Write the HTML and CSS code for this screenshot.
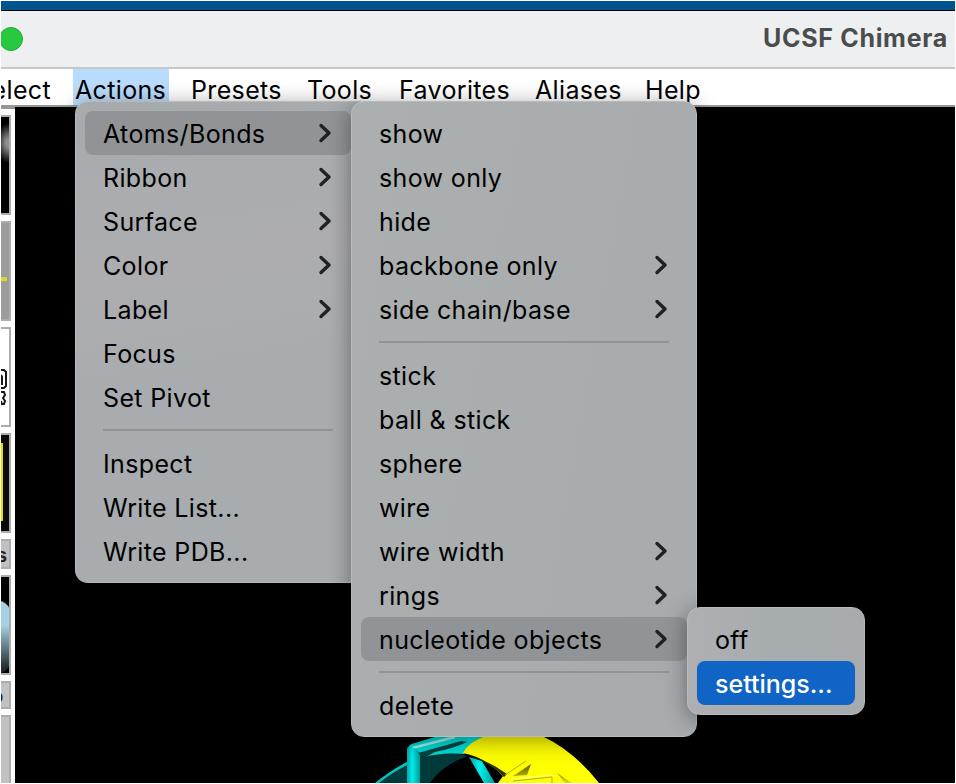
FILE: index.html
```html
<!DOCTYPE html>
<html lang="en">
<head>
<meta charset="utf-8">
<title>UCSF Chimera</title>
<link rel="stylesheet" href="styles.css">
</head>
<body>
<div class="screen">
  <div class="desktop"></div>
  <header class="titlebar"><span class="zoom-button"></span><h1>UCSF Chimera</h1></header>
  <nav class="menubar">
    <span class="m-select">Select</span><span class="m-actions">Actions</span><span class="m-presets">Presets</span><span class="m-tools">Tools</span><span class="m-favorites">Favorites</span><span class="m-aliases">Aliases</span><span class="m-help">Help</span>
  </nav>
  <main class="viewport">
    <aside class="sidebar">
      <div class="thumb t-smoke"></div>
      <div class="thumb t-grey"><i></i></div>
      <div class="thumb t-white"><svg width="8" height="96" viewBox="0 0 8 96"><g fill="none" stroke="#181818" stroke-width="2"><path d="M0 41h3l2 2v14l-2 2H0M0 46l1 2v8M0 63h3l1 3-2 3 2 3-1 3H1M0 72l1 4"/></g></svg></div>
      <div class="thumb t-yellow"></div>
      <div class="thumb label"><b>s</b></div>
      <div class="thumb t-sphere"></div>
      <div class="thumb label short"><b>o</b></div>
      <div class="thumb label tall"></div>
    </aside>
    <svg class="molecule" width="240" height="47" viewBox="370 736 240 47">
      <defs>
        <linearGradient id="tube" x1="0" x2="1" y1="0" y2="0"><stop offset="0" stop-color="#00a8a8"/><stop offset=".4" stop-color="#00f0ec"/><stop offset="1" stop-color="#009a9a"/></linearGradient>
        <linearGradient id="fold" x1="0" x2="0" y1="0" y2="1"><stop offset="0" stop-color="#5a5a00"/><stop offset="1" stop-color="#dede00"/></linearGradient>
      </defs>
      <path fill="#003b3b" d="M375 783Q392 769 408 761L420 754Q448 751 468 756Q442 765 430 783Z"/>
      <path fill="#00c4c4" d="M375 783Q390 771 407 762V765Q390 774 379 783Z"/>
      <path fill="#00dcd8" d="M408 748Q409 744 415 743L438 736H486L464 754Q442 752 424 757L416 750Z"/>
      <path fill="#004444" d="M418 753L461 741L467 742Q452 749 435 752L424 758Z"/>
      <path stroke="#9df5f0" stroke-width="2.5" d="M412 748L455 737"/>
      <path fill="url(#tube)" d="M407 783V748Q414 744 420 755V783Z"/>
      <path fill="url(#tube)" d="M469 757L482 761L495 783H484Z"/>
      <path fill="#ffff00" d="M486 736H542Q574 751 599 783H498L503 776Q485 757 463 753Q468 742 486 736Z"/>
      <path fill="#343400" d="M467 755Q488 760 507 774L504 777Q491 763 467 755Z"/>
      <path fill="url(#fold)" d="M513 776L531 764L527 775ZM557 773L572 783H565Z"/>
      <path stroke="#b0b000" fill="none" d="M505 775L526 761M513 781L552 777V783"/>
      <path stroke="#ffffb0" fill="none" d="M511 779L552 775"/>
    </svg>
  </main>

  <section class="menu menu-actions">
    <div class="item active"><span>Atoms/Bonds</span><svg class="chev"><use href="#c"/></svg></div>
    <div class="item"><span>Ribbon</span><svg class="chev"><use href="#c"/></svg></div>
    <div class="item"><span>Surface</span><svg class="chev"><use href="#c"/></svg></div>
    <div class="item"><span>Color</span><svg class="chev"><use href="#c"/></svg></div>
    <div class="item"><span>Label</span><svg class="chev"><use href="#c"/></svg></div>
    <div class="item"><span>Focus</span></div>
    <div class="item"><span>Set Pivot</span></div>
    <hr>
    <div class="item"><span>Inspect</span></div>
    <div class="item"><span>Write List...</span></div>
    <div class="item"><span>Write PDB...</span></div>
  </section>
  <section class="menu menu-atoms">
    <div class="item"><span>show</span></div>
    <div class="item"><span>show only</span></div>
    <div class="item"><span>hide</span></div>
    <div class="item"><span>backbone only</span><svg class="chev"><use href="#c"/></svg></div>
    <div class="item"><span>side chain/base</span><svg class="chev"><use href="#c"/></svg></div>
    <hr>
    <div class="item"><span>stick</span></div>
    <div class="item"><span>ball &amp; stick</span></div>
    <div class="item"><span>sphere</span></div>
    <div class="item"><span>wire</span></div>
    <div class="item"><span>wire width</span><svg class="chev"><use href="#c"/></svg></div>
    <div class="item"><span>rings</span><svg class="chev"><use href="#c"/></svg></div>
    <div class="item active"><span>nucleotide objects</span><svg class="chev"><use href="#c"/></svg></div>
    <hr>
    <div class="item"><span>delete</span></div>
  </section>
  <section class="menu menu-nucleotide">
    <div class="item"><span>off</span></div>
    <div class="item selected"><span>settings...</span></div>
  </section>
  <svg class="defs"><symbol id="c" viewBox="0 0 14 20"><path d="M3 2.5L11 10L3 17.5" fill="none" stroke="#202124" stroke-width="3.4" stroke-linecap="round" stroke-linejoin="round"/></symbol></svg>
</div>
</body>
</html>
```
FILE: styles.css
```css
* { box-sizing: border-box; }
body { margin: 0; background: #fff; font-family: Inter, "Liberation Sans", sans-serif; font-size: 25px; color: #000; }
.screen { position: relative; width: 956px; height: 784px; padding: 1px; overflow: hidden; display: flex; flex-direction: column; }
.desktop { flex: none; height: 10px; background: #00538d; border-bottom: 1px solid #000; }
.titlebar { flex: none; height: 58px; background: #eeeff1; border-bottom: 2px solid #c7c8ca; display: flex; align-items: center; justify-content: space-between; padding-right: 7px; overflow: hidden; }
.zoom-button { width: 24px; height: 24px; margin-left: -2px; border-radius: 50%; background: #28c840; border: 1px solid #1fae32; }
h1 { margin: 0; padding-bottom: 2px; font-size: 25px; font-weight: 700; letter-spacing: .7px; color: #4b4c4c; white-space: nowrap; }
.menubar { flex: none; height: 38px; background: #fff; border-bottom: 2px solid #979797; display: flex; overflow: hidden; line-height: 43px; letter-spacing: .35px; white-space: nowrap; }
.m-select { width: 72px; display: flex; justify-content: flex-end; padding-right: 22px; }
.m-actions { width: 96px; background: #b9dbfc; padding-left: 2px; }
.m-presets { width: 138px; padding-left: 22px; }
.m-tools { width: 92px; }
.m-favorites { width: 136px; }
.m-aliases { width: 110px; }
.viewport { position: relative; flex: 1; background: #000; min-height: 0; overflow: hidden; }
.sidebar { width: 14px; height: 100%; background: #fff; border-top: 2px solid #979797; padding-top: 6px; display: flex; flex-direction: column; gap: 6px; }
.thumb { flex: none; width: 10px; height: 100px; border: 2px solid #adadad; border-left: 0; overflow: hidden; }
.t-smoke { background: radial-gradient(ellipse 12px 20px at 7px 26px, #8c8c8c 20%, #0000 100%), #000; }
.t-grey { background: #9c9c9c; padding-top: 54px; }
.t-grey i { display: block; width: 6px; height: 4px; background: #d8d82a; }
.t-white svg { display: block; }
.t-yellow { background: linear-gradient(#e0e000, #e0e000) 0 8px / 2px 78px no-repeat #0a0a0a; }
.label { height: 30px; background: #c1c1c1; }
.label b { display: block; margin-left: -5px; font: bold 20px/29px "Liberation Sans", sans-serif; color: #222; }
.short { height: 28px; }
.short b { margin-left: -10px; line-height: 27px; }
.tall { height: 80px; }
.t-sphere { background: radial-gradient(ellipse 18px 37px at -2px 60px, #0000 95%, #000 100%), linear-gradient(#a5d2e2 25%, #a5d2e2 50%, #202c31 95%); }
.molecule { position: absolute; left: 369px; bottom: 0; }
.menu { position: absolute; background: linear-gradient(100deg, #abafb0, #a7abad); border: 1px solid #b8babb; border-radius: 13px; padding: 9px; box-shadow: 0 4px 22px #0006; }
.menu-actions { left: 75px; top: 101px; width: 286px; height: 482px; border-right: 0; border-radius: 13px 0 0 13px; padding-right: 10px; background: linear-gradient(170deg, #a7abad, #adadb0 35%, #a8acae 60%); }
.menu-atoms { left: 351px; top: 101px; width: 346px; height: 636px; }
.menu-nucleotide { left: 687px; top: 607px; width: 178px; height: 108px; background: linear-gradient(90deg, #afafb2, #a7adae 45%, #a7abad); }
.item { height: 44px; padding: 0 19px 0 18px; border-radius: 8px; display: flex; align-items: center; justify-content: space-between; letter-spacing: .36px; white-space: nowrap; }
.item span { padding-top: 2px; }
.active { background: #919496; }
.selected { background: #1064c5; color: #fff; font-weight: 500; letter-spacing: 0; }
.chev { width: 14px; height: 20px; }
.defs { position: absolute; width: 0; height: 0; }
hr { height: 2px; margin: 10px 18px; border: 0; background: #909496; }
```
